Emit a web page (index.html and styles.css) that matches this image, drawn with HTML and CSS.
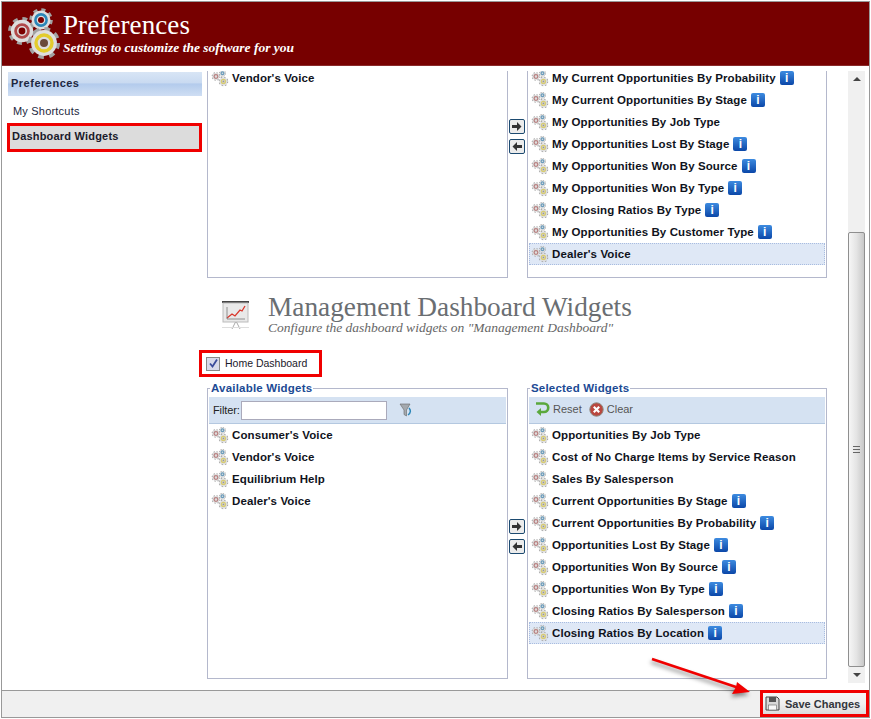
FILE: index.html
```html
<!DOCTYPE html>
<html lang="en">
<head>
    <meta charset="UTF-8">
    <title>Preferences</title>
    <link rel="stylesheet" href="styles.css">
</head>
<body>
    <svg class="defs" width="0" height="0">
        <defs>
            <g id="gear">
                <circle r="9" fill="none" stroke="#a2a2a2" stroke-width="3.4" stroke-dasharray="3.6 3.47"/>
                <circle r="8.6" fill="#dedede"/>
            </g>
            <symbol id="gears" viewBox="0 0 58 56">
                <use href="#gear" transform="translate(18 28) scale(1.3)"/>
                <circle cx="18" cy="28" r="6.4" fill="none" stroke="#b0494a" stroke-width="2.8"/>
                <circle cx="18" cy="28" r="3.4" fill="#7a0000"/>
                <use href="#gear" transform="translate(37 17) scale(1.1)"/>
                <circle cx="37" cy="17" r="5.6" fill="none" stroke="#2b86b8" stroke-width="2.6"/>
                <circle cx="37" cy="17" r="3" fill="#7a0000"/>
                <use href="#gear" transform="translate(40 40) scale(1.5)"/>
                <circle cx="40" cy="40" r="8" fill="none" stroke="#e3cc2c" stroke-width="3.4"/>
                <circle cx="40" cy="40" r="4" fill="#6a4a3a"/>
            </symbol>
            <symbol id="gears-small" viewBox="0 0 58 56">
                <use href="#gear" transform="translate(16 23) scale(1.3)"/>
                <circle cx="16" cy="23" r="6" fill="none" stroke="#b88080" stroke-width="4"/>
                <use href="#gear" transform="translate(37 13) scale(1.05)"/>
                <circle cx="37" cy="13" r="4.500" fill="none" stroke="#6a9cbc" stroke-width="4"/>
                <use href="#gear" transform="translate(40 39) scale(1.45)"/>
                <circle cx="40" cy="39" r="6.500" fill="none" stroke="#d8cc70" stroke-width="4"/>
                <circle cx="40" cy="39" r="3" fill="#999"/>
            </symbol>
            <symbol id="arrow-right" viewBox="0 0 16 15">
                <path d="M3 6h5V3l4.500 4.500L8 12V9H3z" fill="#333"/>
            </symbol>
            <symbol id="arrow-left" viewBox="0 0 16 15">
                <path d="M13 6H8V3L3.500 7.500 8 12V9h5z" fill="#333"/>
            </symbol>
        </defs>
    </svg>

    <div class="window">
        <header class="page-header">
            <svg class="header-icon" width="58" height="56"><use href="#gears"/></svg>
            <div>
                <h1>Preferences</h1>
                <p>Settings to customize the software for you</p>
            </div>
        </header>

        <div class="page-body">
            <nav class="sidebar">
                <h2>Preferences</h2>
                <a class="nav-link">My Shortcuts</a>
                <a class="nav-link active">Dashboard Widgets</a>
            </nav>

            <main class="scroller">
                <section class="picker picker-cut">
                    <div class="box">
                        <ul class="widget-list">
                            <li><svg class="gi"><use href="#gears-small"/></svg>Vendor's Voice</li>
                        </ul>
                    </div>
                    <div class="move-buttons">
                        <button class="move"><svg width="16" height="15"><use href="#arrow-right"/></svg></button>
                        <button class="move"><svg width="16" height="15"><use href="#arrow-left"/></svg></button>
                    </div>
                    <div class="box">
                        <ul class="widget-list">
                            <li><svg class="gi"><use href="#gears-small"/></svg>My Current Opportunities By Probability<span class="info">i</span></li>
                            <li><svg class="gi"><use href="#gears-small"/></svg>My Current Opportunities By Stage<span class="info">i</span></li>
                            <li><svg class="gi"><use href="#gears-small"/></svg>My Opportunities By Job Type</li>
                            <li><svg class="gi"><use href="#gears-small"/></svg>My Opportunities Lost By Stage<span class="info">i</span></li>
                            <li><svg class="gi"><use href="#gears-small"/></svg>My Opportunities Won By Source<span class="info">i</span></li>
                            <li><svg class="gi"><use href="#gears-small"/></svg>My Opportunities Won By Type<span class="info">i</span></li>
                            <li><svg class="gi"><use href="#gears-small"/></svg>My Closing Ratios By Type<span class="info">i</span></li>
                            <li><svg class="gi"><use href="#gears-small"/></svg>My Opportunities By Customer Type<span class="info">i</span></li>
                            <li class="selected"><svg class="gi"><use href="#gears-small"/></svg>Dealer's Voice</li>
                        </ul>
                    </div>
                </section>

                <div class="section-title">
                    <svg class="chart-icon" width="32" height="32" viewBox="0 0 32 32">
                        <rect x="2" y="3" width="27" height="2" fill="#444"/>
                        <rect x="3" y="5" width="25" height="19" fill="#e9e9e9" stroke="#bbb"/>
                        <path d="M7 20l5-4 3 2 5-6 2 1 3-5" fill="none" stroke="#d9362b" stroke-width="1.300"/>
                        <path d="M7 9v12h18" fill="none" stroke="#777" stroke-width=".8"/>
                        <path d="M15.500 24L12 31M16.500 24L20 31" stroke="#aaa" fill="none"/>
                        <rect x="2" y="29" width="27" height="1" fill="#ddd"/>
                    </svg>
                    <div class="section-text">
                        <h2>Management Dashboard Widgets</h2>
                        <p>Configure the dashboard widgets on "Management Dashboard"</p>
                    </div>
                </div>

                <label class="home-check">
                    <span class="check">
                        <svg width="11" height="11" viewBox="0 0 11 11"><path d="M2 5.500l2.500 3L9 1.500" fill="none" stroke="#3a4a9a" stroke-width="1.800"/></svg>
                    </span>
                    <span class="home-label">Home Dashboard</span>
                </label>

                <section class="picker">
                    <fieldset class="box">
                        <legend>Available Widgets</legend>
                        <div class="toolbar">
                            <label class="filter-label">Filter:</label>
                            <input class="filter-input" type="text">
                            <svg class="funnel" width="14" height="15" viewBox="0 0 14 15">
                                <path d="M1 1h10L7.500 7v6L5 11.500V7z" fill="#a4a9ae" stroke="#666" stroke-width=".6"/>
                                <path d="M10 5c2 2 2 5-1 7" fill="none" stroke="#2b86b8" stroke-width="1.500"/>
                            </svg>
                        </div>
                        <ul class="widget-list">
                            <li><svg class="gi"><use href="#gears-small"/></svg>Consumer's Voice</li>
                            <li><svg class="gi"><use href="#gears-small"/></svg>Vendor's Voice</li>
                            <li><svg class="gi"><use href="#gears-small"/></svg>Equilibrium Help</li>
                            <li><svg class="gi"><use href="#gears-small"/></svg>Dealer's Voice</li>
                        </ul>
                    </fieldset>
                    <div class="move-buttons lower">
                        <button class="move"><svg width="16" height="15"><use href="#arrow-right"/></svg></button>
                        <button class="move"><svg width="16" height="15"><use href="#arrow-left"/></svg></button>
                    </div>
                    <fieldset class="box">
                        <legend>Selected Widgets</legend>
                        <div class="toolbar">
                            <a class="tool">
                                <svg width="16" height="16" viewBox="0 0 16 16">
                                    <path d="M2 2.500h8a3.700 3.700 0 0 1 0 8.500H6" fill="none" stroke="#5aa83c" stroke-width="2.600"/>
                                    <path d="M7 7L2.500 11 7 15z" fill="#5aa83c"/>
                                </svg>
                                Reset
                            </a>
                            <a class="tool">
                                <svg width="15" height="15" viewBox="0 0 15 15">
                                    <circle cx="7.500" cy="7.500" r="6.700" fill="#b9473f" stroke="#8f8a80"/>
                                    <path d="M4.800 4.800l5.400 5.400M10.200 4.800l-5.400 5.400" stroke="#fff" stroke-width="2.200"/>
                                </svg>
                                Clear
                            </a>
                        </div>
                        <ul class="widget-list">
                            <li><svg class="gi"><use href="#gears-small"/></svg>Opportunities By Job Type</li>
                            <li><svg class="gi"><use href="#gears-small"/></svg>Cost of No Charge Items by Service Reason</li>
                            <li><svg class="gi"><use href="#gears-small"/></svg>Sales By Salesperson</li>
                            <li><svg class="gi"><use href="#gears-small"/></svg>Current Opportunities By Stage<span class="info">i</span></li>
                            <li><svg class="gi"><use href="#gears-small"/></svg>Current Opportunities By Probability<span class="info">i</span></li>
                            <li><svg class="gi"><use href="#gears-small"/></svg>Opportunities Lost By Stage<span class="info">i</span></li>
                            <li><svg class="gi"><use href="#gears-small"/></svg>Opportunities Won By Source<span class="info">i</span></li>
                            <li><svg class="gi"><use href="#gears-small"/></svg>Opportunities Won By Type<span class="info">i</span></li>
                            <li><svg class="gi"><use href="#gears-small"/></svg>Closing Ratios By Salesperson<span class="info">i</span></li>
                            <li class="selected"><svg class="gi"><use href="#gears-small"/></svg>Closing Ratios By Location<span class="info">i</span></li>
                        </ul>
                    </fieldset>
                </section>
            </main>

            <div class="scrollbar">
                <span class="sb-arrow up"></span>
                <div class="sb-track">
                    <div class="sb-thumb"><span class="grip"></span></div>
                </div>
                <span class="sb-arrow down"></span>
            </div>
        </div>

        <footer class="page-footer">
            <div class="save-mark">
                <button class="save-btn">
                    <svg width="15" height="15" viewBox="0 0 15 15">
                        <path d="M1 1h11l2 2v11H1z" fill="#d8d8d8" stroke="#444"/>
                        <rect x="4" y="1" width="7" height="5" fill="#555"/>
                        <rect x="3.500" y="9" width="8" height="5" fill="#f8f8f8" stroke="#666" stroke-width=".6"/>
                    </svg>
                    Save Changes
                </button>
            </div>
        </footer>

        <!-- annotation arrow drawn over the page -->
        <svg class="callout" width="120" height="50" viewBox="0 0 120 50">
            <path d="M1 2L88 31" stroke="#f00000" stroke-width="2.600" fill="none"/>
            <path d="M99 35L81 37 85 30 86 25z" fill="#f00000"/>
        </svg>
    </div>
</body>
</html>
```
FILE: styles.css
```css
* {
    margin: 0;
    padding: 0;
    box-sizing: border-box;
}

body {
    background-color: #fff;
    font-family: "Liberation Sans", Arial, sans-serif;
    color: #111;
}

.defs {
    display: block;
    height: 0;
}

.window {
    position: relative;
    width: 869px;
    height: 717px;
    margin: 1px 0 0 1px;
    border: 1px solid #999;
    display: flex;
    flex-direction: column;
    overflow: hidden;
}

.page-header {
    height: 64px;
    flex: none;
    background-color: #770000;
    display: flex;
    color: #fff;
    font-family: "Liberation Serif", serif;
    border-bottom: 1px solid #8a2a2a;
}

.header-icon {
    margin: 1px 0 0 2px;
    flex: none;
}

.page-header > div {
    margin-left: 1px;
}

.page-header h1 {
    font-size: 27px;
    font-weight: normal;
    line-height: 30px;
    margin: 8px 0 0 0;
    letter-spacing: .1px;
}

.page-header p {
    font-size: 13.500px;
    font-style: italic;
    font-weight: bold;
    line-height: 16px;
}

.page-body {
    flex: 1;
    display: flex;
    min-height: 0;
    padding-top: 5px;
}

.sidebar {
    width: 205px;
    margin-right: -8px;
    flex: none;
    padding: 1px 5px 0 6px;
}

.sidebar h2 {
    font-size: 11px;
    font-weight: bold;
    letter-spacing: .5px;
    height: 24px;
    line-height: 23px;
    padding-left: 3px;
    color: #1c2740;
    background: linear-gradient(#d8e5f5 0, #c9daf1 45%, #b3cbec 50%, #cfdef3 100%);
}

.nav-link {
    display: block;
    font-size: 11px;
    letter-spacing: .2px;
    color: #1c2740;
    height: 27px;
    line-height: 30px;
    padding-left: 5px;
}

.nav-link.active {
    font-weight: bold;
    letter-spacing: .2px;
    background-color: #dcdcdc;
    border: 3px solid #f00000;
    height: 29px;
    width: 195px;
    margin-left: -1px;
    padding-left: 2px;
    line-height: 20px;
    color: #1a1a2a;
}

.scroller {
    width: 648px;
    height: 612px;
    flex: none;
    padding-left: 8px;
    overflow: hidden;
}

.scrollbar {
    width: 17px;
    height: 612px;
    margin-left: 1px;
    flex: none;
    background-color: #f0f0f0;
    display: flex;
    flex-direction: column;
    align-items: center;
}

.sb-arrow {
    flex: none;
    height: 16px;
    width: 100%;
    display: flex;
    align-items: center;
    justify-content: center;
}

.sb-arrow::before {
    content: "";
    border-left: 4px solid transparent;
    border-right: 4px solid transparent;
}

.sb-arrow.up::before {
    border-bottom: 4px solid #444;
}

.sb-arrow.down::before {
    border-top: 4px solid #444;
}

.sb-track {
    flex: 1;
    width: 100%;
    padding-top: 145px;
}

.sb-thumb {
    height: 435px;
    width: 100%;
    border: 1px solid #8f8f8f;
    border-radius: 2px;
    background: linear-gradient(90deg, #f6f6f6, #e4e4e4 50%, #c8c8c8);
    display: flex;
    align-items: center;
    justify-content: center;
}

.grip {
    width: 7px;
    height: 7px;
    border-top: 1px solid #666;
    border-bottom: 1px solid #666;
    background: linear-gradient(#666, #666) center / 100% 1px no-repeat;
}

.picker {
    display: grid;
    grid-template-columns: 301px 19px 300px;
}

.picker-cut {
    height: 207px;
}

.picker-cut .box {
    border-top: none;
    height: 207px;
    overflow: hidden;
}

.picker-cut .widget-list {
    margin-top: -4px;
}

.box {
    border: 1px solid #b4b8cc;
    min-width: 0;
    height: 298px;
    padding: 0 1px;
}

legend {
    font-size: 11.500px;
    font-weight: bold;
    color: #1c4a94;
    line-height: 14px;
    margin-left: 1px;
    padding: 0 1px;
    letter-spacing: .2px;
}

.toolbar {
    height: 27px;
    margin-top: 2px;
    background-color: #d5e2f2;
    border-bottom: 1px solid #b4c8e0;
    display: flex;
    align-items: center;
    font-size: 11px;
    padding-left: 4px;
}

.filter-label {
    letter-spacing: -.1px;
    color: #222;
}

.filter-input {
    width: 146px;
    height: 19px;
    margin-left: 1px;
    border: 1px solid #aab;
    background-color: #fff;
}

.funnel {
    margin-left: 12px;
}

.tool {
    display: flex;
    align-items: center;
    gap: 3px;
    color: #555;
    font-size: 11px;
    margin-left: 1px;
    margin-right: 6px;
    padding-bottom: 2px;
}

.widget-list {
    list-style: none;
}

.widget-list li {
    height: 22px;
    display: flex;
    align-items: center;
    font-size: 11.500px;
    font-weight: bold;
    letter-spacing: .1px;
    padding-left: 2px;
    color: #10131c;
}

.widget-list li.selected {
    background-color: #dfe8f6;
    outline: 1px dotted #a8bce0;
    outline-offset: -1px;
}

.gi {
    width: 18px;
    height: 18px;
    margin-right: 3px;
    flex: none;
}

.info {
    width: 14px;
    height: 14px;
    margin-left: 4px;
    border-radius: 2px;
    background: linear-gradient(#3d8be0, #0b47a8);
    color: #fff;
    font-size: 12px;
    font-weight: bold;
    font-family: "Liberation Sans", sans-serif;
    line-height: 14px;
    text-align: center;
    flex: none;
}

.move-buttons {
    display: flex;
    flex-direction: column;
    gap: 5px;
    padding: 48px 0 0 1px;
}

.move-buttons.lower {
    padding-top: 138px;
}

.move {
    width: 16px;
    height: 15px;
    border: 1px solid #1c4a70;
    border-radius: 2px;
    background-color: #ececec;
    display: block;
}

.move svg {
    display: block;
    margin: -1px;
}

.section-title {
    display: flex;
    height: 72px;
    padding: 20px 0 0 13px;
}

.chart-icon {
    flex: none;
    margin-right: 16px;
}

.section-text {
    margin-top: -3px;
}

.section-title h2 {
    font-family: "Liberation Serif", serif;
    font-size: 27.300px;
    font-weight: normal;
    color: #6a6e72;
    line-height: 24px;
    margin-bottom: 2px;
}

.section-title p {
    font-family: "Liberation Serif", serif;
    font-size: 13.500px;
    font-style: italic;
    color: #666;
    line-height: 14px;
}

.home-check {
    display: flex;
    align-items: center;
    width: 123px;
    height: 27px;
    margin-left: -8px;
    border: 3px solid #f00000;
    font-size: 10.500px;
    color: #1a1a2a;
    padding-left: 4px;
    margin-bottom: 4px;
}

.home-label {
    padding-bottom: 2px;
}

.check {
    width: 14px;
    height: 14px;
    margin-right: 5px;
    border: 1px solid #888;
    background-color: #d8d9ea;
    display: flex;
    align-items: center;
    justify-content: center;
}

.page-footer {
    height: 27px;
    flex: none;
    border-top: 1px solid #999;
    background-color: #f0f0f0;
    display: flex;
    justify-content: flex-end;
}

.save-mark {
    width: 109px;
    height: 27px;
    margin-top: -1px;
    border: 3px solid #f00000;
}

.save-btn {
    width: 103px;
    height: 21px;
    border: none;
    background: linear-gradient(#f6f6f6, #f0f0f0 50%, #dcdcdc);
    display: flex;
    align-items: center;
    gap: 5px;
    padding-left: 2px;
    font-family: "Liberation Sans", Arial, sans-serif;
    font-size: 11px;
    font-weight: bold;
    color: #33363c;
}

.callout {
    position: absolute;
    left: 649px;
    top: 655px;
    filter: drop-shadow(-1px 3px 2px rgba(0, 0, 0, .45));
}
```
